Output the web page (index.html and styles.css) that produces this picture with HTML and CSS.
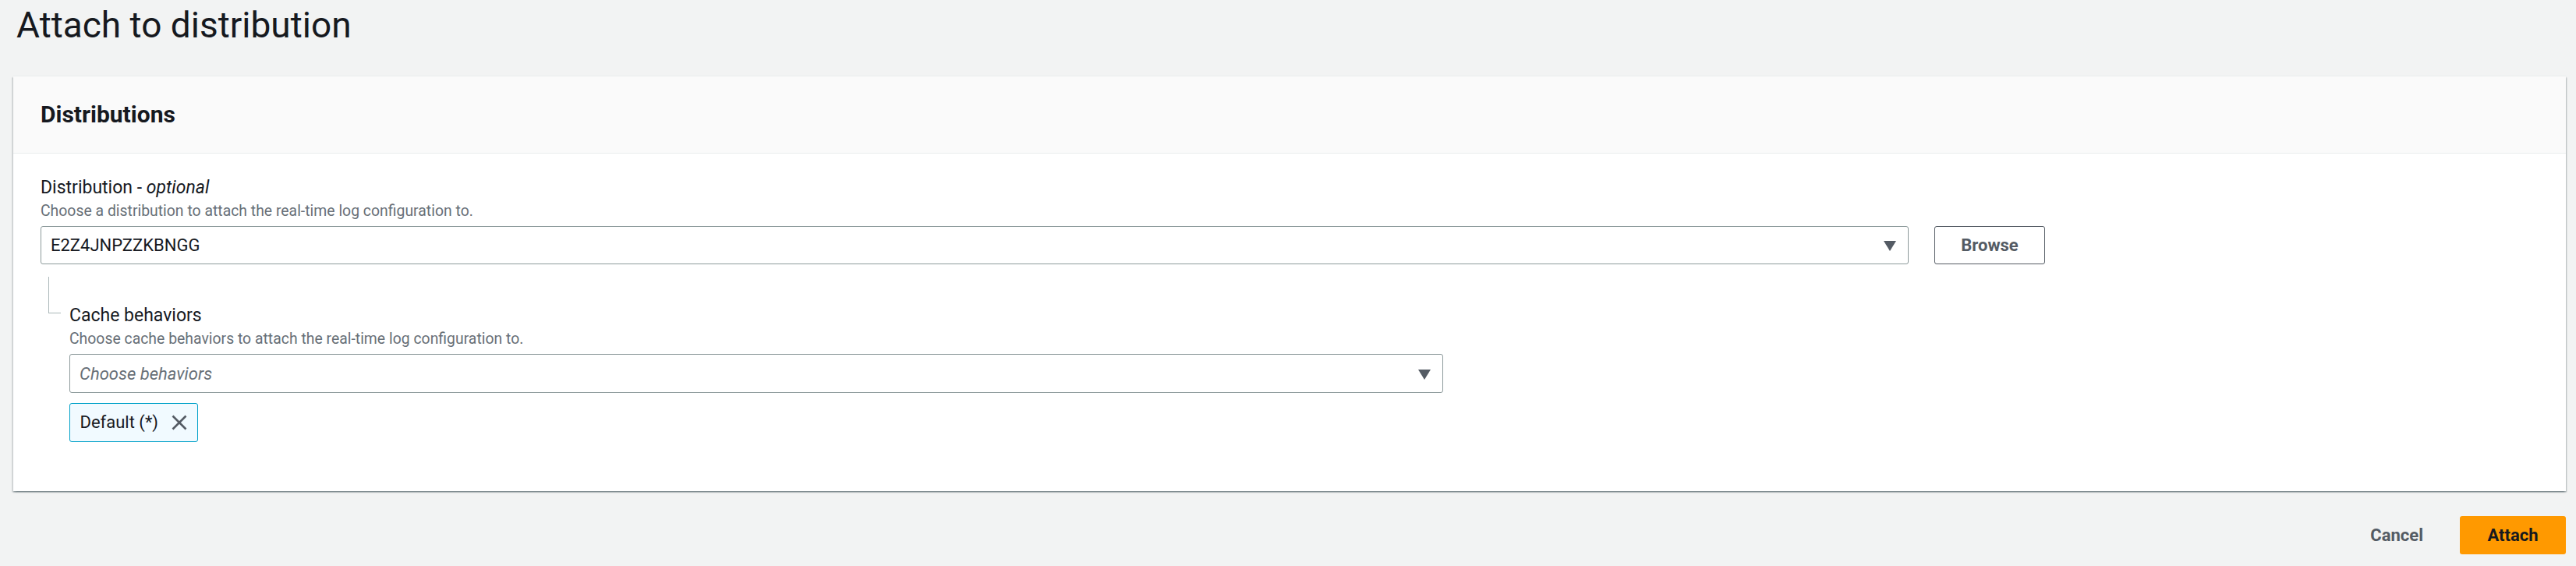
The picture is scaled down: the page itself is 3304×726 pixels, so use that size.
FILE: index.html
```html
<!DOCTYPE html>
<html lang="en">
<head>
<meta charset="utf-8">
<title>Attach to distribution</title>
<link rel="stylesheet" href="styles.css">
</head>
<body>
<div class="page">
  <h1 class="title">Attach to distribution</h1>
  <section class="card">
    <header class="card-header">
      <h2 class="card-title">Distributions</h2>
    </header>
    <div class="card-body">
      <div class="field">
        <div class="label">Distribution - <em>optional</em></div>
        <div class="desc">Choose a distribution to attach the real-time log configuration to.</div>
        <div class="control-row">
          <div class="select select-dist">
            <span class="select-value">E2Z4JNPZZKBNGG</span>
            <svg class="caret" width="16" height="13" viewBox="0 0 16 13"><polygon points="0,0 16,0 8,13" fill="#545b64"/></svg>
          </div>
          <button class="btn btn-normal">Browse</button>
        </div>
      </div>
      <div class="nested">
        <div class="tree"><div class="tree-line"></div></div>
        <div class="nested-content">
          <div class="label">Cache behaviors</div>
          <div class="desc">Choose cache behaviors to attach the real-time log configuration to.</div>
          <div class="select select-behaviors">
            <span class="select-placeholder">Choose behaviors</span>
            <svg class="caret" width="16" height="13" viewBox="0 0 16 13"><polygon points="0,0 16,0 8,13" fill="#545b64"/></svg>
          </div>
          <div class="tokens">
            <div class="token">
              <span class="token-text">Default (*)</span>
              <svg class="token-x" width="20" height="20" viewBox="0 0 20 20"><path d="M1.5 1.5 L18.5 18.5 M18.5 1.5 L1.5 18.5" stroke="#545b64" stroke-width="2.6" fill="none"/></svg>
            </div>
          </div>
        </div>
      </div>
    </div>
  </section>
  <div class="footer">
    <button class="btn btn-link">Cancel</button>
    <button class="btn btn-primary">Attach</button>
  </div>
</div>
</body>
</html>
```

FILE: styles.css
```css
* { box-sizing: border-box; }

body {
  margin: 0;
  background: #f2f3f3;
  font-family: Roboto, "Open Sans", "Liberation Sans", sans-serif;
  color: #16191f;
}

.page {
  padding: 0 13px 0 17px;
}

.title {
  margin: 0 0 35px 0;
  padding: 2px 0 0 4px;
  font-size: 46px;
  line-height: 60px;
  font-weight: 400;
  color: #16191f;
}

.card {
  background: #fff;
  box-shadow: 0 1.6px 1.6px 0 rgba(0, 28, 36, 0.3),
              1.6px 1.6px 1.6px 0 rgba(0, 28, 36, 0.15),
              -1.6px 1.6px 1.6px 0 rgba(0, 28, 36, 0.15);
  border-top: 1px solid #eaeded;
}

.card-header {
  background: #fafafa;
  border-bottom: 1.5px solid #eaeded;
  padding: 31px 35px 31px 35px;
}

.card-title {
  margin: 0;
  font-size: 30px;
  line-height: 36px;
  font-weight: 700;
  color: #16191f;
}

.card-body {
  padding: 27px 35px 63px 35px;
}

.label {
  font-size: 23px;
  line-height: 34px;
  color: #16191f;
}

.label em {
  font-style: italic;
}

.desc {
  font-size: 19.4px;
  line-height: 26px;
  color: #687078;
}

.control-row {
  display: flex;
  align-items: center;
  gap: 33px;
  margin-top: 6px;
}

.select {
  display: flex;
  align-items: center;
  justify-content: space-between;
  border: 1.5px solid #8d9a9b;
  border-radius: 3px;
  background: #fff;
  padding: 0 15.5px 0 12px;
}

.select-dist {
  width: 2396px;
  height: 49px;
}

.select-behaviors {
  width: 1762px;
  height: 50px;
  margin-top: 6px;
}

.select-value {
  font-size: 22px;
  color: #16191f;
}

.select-placeholder {
  font-size: 22px;
  font-style: italic;
  color: #687078;
}

.caret {
  display: block;
  margin-top: 2px;
}

.btn {
  font-family: inherit;
  font-weight: 700;
  font-size: 22px;
  height: 49px;
  border-radius: 3px;
  cursor: pointer;
}

.btn-normal {
  width: 142px;
  background: #fff;
  border: 1.5px solid #545b64;
  color: #545b64;
}

.nested {
  display: flex;
  margin-top: 16px;
}

.tree {
  width: 37px;
  flex: none;
}

.tree-line {
  margin-left: 10px;
  width: 16px;
  height: 47px;
  border-left: 1.5px solid #aab7b8;
  border-bottom: 1.5px solid #aab7b8;
}

.nested-content {
  padding-top: 33px;
}

.tokens {
  margin-top: 13px;
  display: flex;
}

.token {
  display: flex;
  align-items: center;
  height: 49.5px;
  padding: 0 13px 0 12.5px;
  background: #f1faff;
  border: 1.5px solid #00a1c9;
  border-radius: 3px;
  gap: 17px;
}

.token-text {
  font-size: 22px;
  color: #16191f;
}

.token-x {
  display: block;
}

.footer {
  display: flex;
  justify-content: flex-end;
  align-items: center;
  margin-top: 32px;
}

.btn-link {
  background: transparent;
  border: none;
  color: #545b64;
  padding: 0 22px;
  margin-right: 25px;
}

.btn-primary {
  width: 136px;
  background: #ff9900;
  border: none;
  color: #16191f;
}
```
